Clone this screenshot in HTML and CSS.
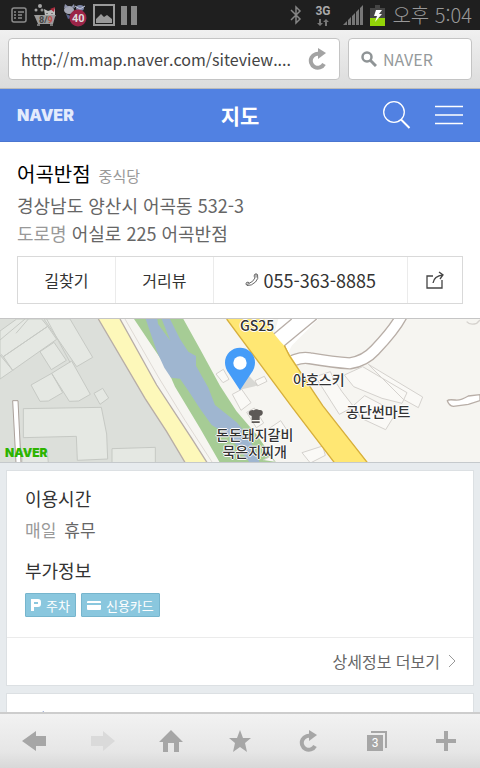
FILE: index.html
```html
<!DOCTYPE html>
<html lang="ko">
<head>
    <meta charset="UTF-8">
    <title>어곡반점 - 네이버 지도</title>
    <meta name="viewport" content="width=device-width, initial-scale=1.0">
    <link rel="stylesheet" href="styles.css">
</head>
<body>
    <div class="status-bar">
        <div class="status-left">
            <svg width="16" height="16" viewBox="0 0 16 16" fill="none" stroke="#8c8c8c" stroke-width="1.5">
                <rect x="1" y="1" width="14" height="14" rx="2"/>
                <path d="M3 5h2M7 5h6M3 8h2M7 8h4M3 11h2M7 11h4"/>
            </svg>
            <svg width="24" height="24" viewBox="0 0 24 24">
                <circle cx="7" cy="3" r="2" fill="#a5a5a5"/>
                <circle cx="3" cy="7" r="1.5" fill="#a5a5a5"/>
                <circle cx="9" cy="7" r="1.5" fill="#8f8f8f"/>
                <path d="M12 13l-1-7 4 2 3-1 4-2v8z" fill="#bdbdbd"/>
                <path d="M17 6l5-2-1 5z" fill="#a8283a"/>
                <path d="M14 10v1M19 10v1" stroke="#333"/>
                <path d="M1 12h22l-1 2-2 7H5l-3-7z" fill="#9b9b9b"/>
                <path d="M4 22h3M17 22h3" stroke="#777" stroke-width="2"/>
                <text x="6" y="20" class="tub-text">8/<tspan fill="#c0504a">9</tspan></text>
            </svg>
            <svg width="24" height="24" viewBox="0 0 24 24">
                <ellipse cx="6" cy="7" rx="5" ry="4" fill="#a4a7b5"/>
                <path d="M1 5l1-4 4 3M8 4l3-3 1 4" fill="#8a8fa8"/>
                <path d="M3 11l2 5 5-2z" fill="#58658f"/>
                <ellipse cx="17" cy="5" rx="4" ry="3" fill="#7d86a8"/>
                <path d="M12 3l5 3 5-3" stroke="#c3c7d4" fill="none"/>
                <circle cx="15" cy="15" r="8.500" fill="#9b2447"/>
                <text x="9" y="19" class="badge-text">40</text>
            </svg>
            <svg width="22" height="22" viewBox="0 0 22 22">
                <rect x="1" y="1" width="20" height="20" fill="none" stroke="#9a9a9a" stroke-width="2"/>
                <path d="M3 19v-4l5-5 3 3 3-2 5 4v4z" fill="#9a9a9a"/>
            </svg>
            <svg width="16" height="19" viewBox="0 0 16 19" fill="#8a8a8a">
                <rect width="6" height="19"/>
                <rect x="10" width="6" height="19"/>
            </svg>
        </div>
        <div class="status-right">
            <svg width="12" height="20" viewBox="0 0 12 20" fill="none" stroke="#858585" stroke-width="1.5">
                <path d="M1 5l9 9-4 4V2l4 4-9 9"/>
            </svg>
            <div class="network">
                <span>3G</span>
                <svg width="12" height="7" viewBox="0 0 12 7" fill="#777">
                    <path d="M2 0h2v4h2L3 7 0 4h2zM8 7h2V3h2L9 0 6 3h2z"/>
                </svg>
            </div>
            <svg width="20" height="20" viewBox="0 0 20 20" fill="#777">
                <path d="M0 20l4-4v4zM5 15l3-3v8H5zM9 11l3-3v12H9zM13 7l3-3v16h-3zM17 3l3-3v20h-3z"/>
            </svg>
            <svg width="15" height="21" viewBox="0 0 15 21">
                <path d="M5 0h5v3h5v10H0V3h5z" fill="#454545"/>
                <path d="M0 13h15v8H0z" fill="#93d408"/>
                <path d="M6 5h6L9 9h3l-7 8 2-6H4z" fill="#fff"/>
            </svg>
            <span class="clock">오후 5:04</span>
        </div>
    </div>

    <form class="url-bar">
        <div class="field url-field">
            <input type="text" aria-label="주소" value="http://m.map.naver.com/siteview....">
            <button type="button" aria-label="새로고침">
                <svg width="19" height="22" viewBox="0 0 19 22">
                    <path d="M16 16a7 7 0 1 1-3-9.500" fill="none" stroke="#a3a3a3" stroke-width="4"/>
                    <path d="M10 0l8 5-8 6z" fill="#a3a3a3"/>
                </svg>
            </button>
        </div>
        <div class="field search-field">
            <svg width="16" height="16" viewBox="0 0 16 16" fill="none" stroke="#8f9496" stroke-width="2.500">
                <circle cx="6" cy="6" r="4.500"/>
                <path d="M9.500 9.500L15 15" stroke-width="3"/>
            </svg>
            <input type="search" aria-label="검색" placeholder="NAVER">
        </div>
    </form>

    <main class="page">
        <header class="top-bar">
            <a href="#" class="logo">NAVER</a>
            <h1>지도</h1>
            <div class="top-actions">
                <button type="button" aria-label="검색">
                    <svg width="28" height="28" viewBox="0 0 28 28" fill="none" stroke="#fff">
                        <circle cx="11" cy="11" r="10.300" stroke-width="1.300"/>
                        <path d="M18 18.500l8.500 8.500" stroke-width="2"/>
                    </svg>
                </button>
                <button type="button" aria-label="메뉴">
                    <svg width="28" height="20" viewBox="0 0 28 20" fill="none" stroke="#fff" stroke-width="1.300">
                        <path d="M0 1.500h28M0 10h28M0 18.500h28"/>
                    </svg>
                </button>
            </div>
        </header>

        <section class="place">
            <div class="place-name">
                <h2>어곡반점</h2>
                <span>중식당</span>
            </div>
            <p>경상남도 양산시 어곡동 532-3</p>
            <p><span class="muted">도로명</span> 어실로 225 어곡반점</p>
            <nav class="place-menu">
                <a href="#">길찾기</a>
                <a href="#">거리뷰</a>
                <a href="tel:055-363-8885" class="phone">
                    <svg width="14" height="14" viewBox="0 0 14 14" fill="none" stroke="#666">
                        <path d="M9.500 1.500q1.500-1.500 3 0 1.500 4-2 7.500-4 4-8.500 3.500Q0 11 1.500 9.500q1.500-1 3 .5 3-.5 5.500-5-1.500-2-.5-3.500zM11 1v3.500M1.500 11.500l3-1"/>
                    </svg>
                    <span>055-363-8885</span>
                </a>
                <a href="#" class="share" aria-label="공유">
                    <svg width="20" height="18" viewBox="0 0 20 18" fill="none" stroke="#444" stroke-width="1.300">
                        <path d="M8 5H2v12h15V9M8 12q1-7 10-8M14 1l4 3-3 4"/>
                    </svg>
                </a>
            </nav>
        </section>

        <div class="map">
            <svg class="map-tiles" viewBox="0 12 1440 432" preserveAspectRatio="xMidYMid slice">
                <rect y="12" width="1440" height="432" fill="#f6f5f1"/>
                <path d="M0 12h300l260 432H0z" fill="#dcdfda"/>
                <!-- buildings, west side -->
                <g fill="#e5e8e3" stroke="#c6c9c4" stroke-width="3">
                    <path d="M0 48L50 12h75l18 22L10 125 0 115zM10 125L143 34l27 39L38 166zM0 120l38 46L0 192z"/>
                    <path d="M132 12h78l68 115-48 28zM120 110l42-28 37 54-45 28z"/>
                    <path d="M93 210l62-35 33 58-43 25-25 1zM155 175l60-37 56 100-35 20-28 1z"/>
                    <path d="M282 235l26-15 18 29-26 19zM70 281l234-4 16 80 3 75-91 4-3-72-159 4zM336 401l130-4v47H336zM66 410h76l3 34H66z"/>
                    <path d="M0 75L75 12M48 55L85 12M140 12l70 130" fill="none"/>
                </g>
                <path d="M38 257h16l9 187H48z" fill="#fff" stroke="#aaa09a" stroke-width="3"/>
                <!-- roads and river -->
                <path d="M295 12h65l110 198 105 160 47 74h-66l-56-94-65-100z" fill="#fdf8ba"/>
                <path d="M295 12l140 238 65 100 56 94M360 12l110 198 105 160 47 74" fill="none" stroke="#b8aea7" stroke-width="4"/>
                <path d="M375 12l100 174 80 130 83 128" fill="none" stroke="#dfdad5" stroke-width="3"/>
                <path d="M402 12h148l50 90 60 110 49 76 60 70 60 86H660l-60-104-75-125-25-57z" fill="#a6cc95"/>
                <path d="M437 12h73l30 60 25 38 23 13v29l37 66 20 52 65 52 35 42 35 80h-30l-65-84-50-30-37-52-31-48-27-39-27-3-20-30-23-50z" fill="#9fb6d0"/>
                <path d="M472 12h13l26 65-37-50z" fill="#a6cc95"/>
                <!-- buildings, east side -->
                <g fill="#faf9f6" stroke="#d5d2ce" stroke-width="3">
                    <path d="M648 177l22-14 17 30-18 10zM765 197l28-13 8 15-29 14zM697 238l28-15 28 40-30 23zM740 292l23-13 28 45-22 14z"/>
                    <path d="M808 340l34-23 20 30-28 20zM906 413l62-20 8 28-45 23zM946 185l45-15 15 30 20 30 35 45-43 23z"/>
                    <path d="M1033 180l55-25 133 78-15 32-60-15-85-35zM1062 270l32-28 95 50-32 52-75-35zM1105 148l163 98-13 32-45-25zM790 435l20-10 15 15"/>
                </g>
                <path d="M835 12h120L875 92l-15 32-45-42z" fill="#fff"/>
                <path d="M950 12L853 92M853 92l15 32M875 12l-60 50" fill="none" stroke="#b8aea7" stroke-width="4"/>
                <path d="M850 152q45-29 80-22 70 12 120 15 45-7 75-40 60-63 81-105" fill="none" stroke="#b8aea7" stroke-width="37"/>
                <path d="M850 152q45-29 80-22 70 12 120 15 45-7 75-40 60-63 81-105" fill="none" stroke="#fff" stroke-width="29"/>
                <path d="M680 12h112q35 55 61 80l115 182 137 170H1004L875 275z" fill="#ffe773"/>
                <path d="M680 12l195 263 129 169M853 92l15 30 100 150 135 172" fill="none" stroke="#d7af3c" stroke-width="4"/>
                <path d="M1342 257q5 15 18 17l45-6 35-11v-18l-35 4q-25 15-40 12-20-2-23 2z" fill="#fff" stroke="#b8aea7" stroke-width="4"/>
                <path d="M1400 20q10 12 30 5l10-10" fill="none" stroke="#d5d2ce" stroke-width="4"/>
                <!-- restaurant mark -->
                <path d="M755 315v-12q-12-3-8-13 5-7 15-4 7-6 15-1 13-2 11 11-1 6-9 7v12zM755 319h24v5h-24z" fill="#5d5957"/>
                <!-- pin -->
                <path d="M720 224l55-13-30-30z" fill="#c5c4c1" opacity=".6"/>
                <path d="M720 226l-34-52q-11-15-11-31a45 45 0 0 1 90 0q0 16-11 31z" fill="#459cf8"/>
                <circle cx="720" cy="144" r="20" fill="#fff"/>
            </svg>
            <span class="map-label label-gs">GS25</span>
            <span class="map-label label-yaho">야호스키</span>
            <span class="map-label label-mart">공단썬마트</span>
            <span class="map-label label-food">돈돈돼지갈비<br>묵은지찌개</span>
            <a href="#" class="map-logo">NAVER</a>
        </div>

        <div class="cards">
            <section class="card">
                <div class="card-body">
                    <h3>이용시간</h3>
                    <p class="hours"><span class="muted">매일</span><span>휴무</span></p>
                    <h3>부가정보</h3>
                    <div class="chips">
                        <span class="chip">
                            <svg width="10" height="12" viewBox="0 0 10 12" fill="#fff">
                                <path fill-rule="evenodd" d="M0 0h7q3 0 3 3v2q0 3-3 3H3v4H0zM3 3v2h4V3z"/>
                            </svg>
                            주차
                        </span>
                        <span class="chip">
                            <svg width="14" height="10" viewBox="0 0 14 10" fill="#fff">
                                <path d="M0 3V2q0-1 1-1h12q1 0 1 1v1zM0 5h14v4q0 1-1 1H1q-1 0-1-1z"/>
                            </svg>
                            신용카드
                        </span>
                    </div>
                </div>
                <a href="#" class="more">
                    상세정보 더보기
                    <svg width="8" height="14" viewBox="0 0 8 14" fill="none" stroke="#999">
                        <path d="M1 1l6 6-6 6"/>
                    </svg>
                </a>
            </section>
            <section class="card">
                <a href="#" class="edit-link">
                    <svg width="12" height="14" viewBox="0 0 12 14" fill="#8ea2d0">
                        <path d="M0 5l10-5v12l-10-5z"/>
                    </svg>
                    정보수정 요청
                </a>
            </section>
        </div>
    </main>

    <nav class="toolbar">
        <button type="button" aria-label="뒤로">
            <svg width="24" height="22" viewBox="0 0 24 22"><path d="M0 11L14 1v5h10v10H14v5z"/></svg>
        </button>
        <button type="button" aria-label="앞으로" disabled>
            <svg width="24" height="22" viewBox="0 0 24 22"><path d="M24 11L12 1v5H0v10h12v5z"/></svg>
        </button>
        <button type="button" aria-label="홈">
            <svg width="24" height="22" viewBox="0 0 24 22"><path d="M12 0l12 12h-4v10h-5v-9H9v9H4V12H0z"/></svg>
        </button>
        <button type="button" aria-label="북마크">
            <svg width="24" height="22" viewBox="0 0 24 22"><path d="M12 0l3 8h8l-6 5 2 9-7-5-7 5 2-9-6-5h8z"/></svg>
        </button>
        <button type="button" aria-label="새로고침">
            <svg width="19" height="22" viewBox="0 0 19 22">
                <path d="M16 16a7 7 0 1 1-3-9.500" fill="none" stroke="#a6a6a6" stroke-width="4"/>
                <path d="M10 0l8 5-8 6z"/>
            </svg>
        </button>
        <button type="button" class="windows" aria-label="창 목록">
            <svg width="20" height="20" viewBox="0 0 20 20">
                <path d="M0 4h16v16H0zM4 0h16v17h-2V2H4z"/>
            </svg>
            <span>3</span>
        </button>
        <button type="button" aria-label="추가">
            <svg width="20" height="20" viewBox="0 0 20 20"><path d="M8 0h4v8h8v4h-8v8H8v-8H0V8h8z"/></svg>
        </button>
    </nav>
</body>
</html>
```

FILE: styles.css
```css
* {
    box-sizing: border-box;
    margin: 0;
    padding: 0;
}

body {
    display: flex;
    flex-direction: column;
    height: 100vh;
    overflow: hidden;
    font-family: "Noto Sans CJK KR", sans-serif;
    background-color: #e7ebee;
    color: #333;
}

a {
    color: inherit;
    text-decoration: none;
}

button {
    display: flex;
    align-items: center;
    justify-content: center;
    border: none;
    background: none;
    cursor: pointer;
}

svg {
    display: block;
    flex-shrink: 0;
}

.muted {
    color: #999;
}

/* Status bar */
.status-bar {
    flex: 0 0 30px;
    display: flex;
    justify-content: space-between;
    align-items: center;
    padding: 0 8px 0 11px;
    background-color: #1f1f1f;
}

.status-left,
.status-right {
    display: flex;
    align-items: center;
}

.status-left {
    gap: 6px;
}

.status-right {
    gap: 7px;
}

.tub-text,
.badge-text {
    font-family: Roboto, sans-serif;
    font-weight: bold;
    font-size: 9px;
    fill: #444;
}

.badge-text {
    font-size: 11px;
    fill: #ddd;
}

.network {
    display: flex;
    flex-direction: column;
    align-items: center;
    gap: 2px;
    margin: 0 6px;
    font-family: Roboto, sans-serif;
    font-size: 12px;
    line-height: 12px;
    font-weight: bold;
    color: #aaa;
}

.clock {
    font-size: 20px;
    line-height: 30px;
    font-weight: 300;
    color: #999;
}

/* Address bar */
.url-bar {
    flex: 0 0 59px;
    display: flex;
    gap: 8px;
    padding: 8px;
    background: linear-gradient(#f0f0f0, #dcdcdc);
    border-bottom: 1px solid #bbb;
}

.field {
    display: flex;
    align-items: center;
    min-width: 0;
    border: 1px solid #c4c4c4;
    border-radius: 4px;
    background-color: #fff;
}

.field input {
    flex: 1;
    width: 0;
    min-width: 0;
    border: none;
    outline: none;
    background: none;
    font-family: "Noto Sans CJK KR", sans-serif;
    font-size: 16px;
    color: #444;
}

.url-field {
    flex: 1;
    padding: 0 12px;
}

.search-field {
    flex: 0 0 124px;
    gap: 6px;
    padding: 0 12px;
}

.search-field input::placeholder {
    color: #959a9c;
}

/* Page */
.page {
    flex: 1;
    min-height: 0;
    overflow: hidden;
}

.top-bar {
    display: grid;
    grid-template-columns: 1fr auto 1fr;
    align-items: center;
    height: 53px;
    padding: 0 17px;
    background-color: #5181e2;
    border-bottom: 1px solid #4a76d0;
    color: #fff;
}

.top-bar h1 {
    font-size: 21px;
    font-weight: bold;
}

.logo,
.map-logo {
    font-family: Inter, sans-serif;
    font-weight: 900;
    font-size: 16px;
    line-height: 16px;
}

.logo {
    color: #e3ebfc;
}

.top-actions {
    display: flex;
    justify-content: flex-end;
    align-items: center;
    gap: 24px;
}

.place {
    padding: 16px 17px 14px;
    background-color: #fff;
    border-bottom: 1px solid #c5c5c5;
    color: #666;
}

.place-name {
    display: flex;
    align-items: baseline;
    gap: 8px;
    line-height: 31px;
}

.place-name h2 {
    font-size: 20px;
    font-weight: normal;
    color: #000;
}

.place-name span {
    font-size: 15px;
    color: #999;
}

.place p {
    font-size: 18px;
    line-height: 28px;
}

.place-menu {
    display: flex;
    height: 48px;
    margin-top: 9px;
    border: 1px solid #d9d9d9;
    font-size: 16px;
    color: #333;
}

.place-menu a {
    flex: 98;
    display: flex;
    align-items: center;
    justify-content: center;
    gap: 5px;
    border-left: 1px solid #ebebeb;
}

.place-menu a:first-child {
    border-left: none;
}

.place-menu .phone {
    flex: 195;
    font-size: 18px;
}

.place-menu .share {
    flex: 55;
}

/* Map */
.map {
    position: relative;
    height: 144px;
    overflow: hidden;
    border-bottom: 1px solid #c5c9cc;
}

.map-tiles {
    width: 100%;
    height: 144px;
}

.map-label {
    position: absolute;
    font-size: 14px;
    line-height: 17px;
    font-weight: 500;
    text-align: center;
    white-space: nowrap;
    color: #333;
    text-shadow: 1px 0 #fff, -1px 0 #fff, 0 1px #fff, 0 -1px #fff;
}

.label-gs {
    left: 50%;
    top: -2px;
}

.label-yaho {
    left: 293px;
    top: 52px;
}

.label-mart {
    left: 346px;
    top: 84px;
}

.label-food {
    left: 216px;
    top: 107px;
}

.map-logo {
    position: absolute;
    left: 5px;
    bottom: 1px;
    font-size: 12px;
    color: #2db400;
}

/* Cards */
.cards {
    display: flex;
    flex-direction: column;
    gap: 7px;
    padding: 7px 6px;
}

.card {
    background-color: #fff;
    border: 1px solid #dce0e3;
}

.card-body {
    padding: 11px 18px 20px;
}

.card h3 {
    font-size: 18px;
    line-height: 32px;
    font-weight: normal;
    color: #333;
}

.hours {
    display: flex;
    gap: 8px;
    margin-bottom: 8px;
    font-size: 17px;
    line-height: 32px;
    color: #666;
}

.chips {
    display: flex;
    gap: 5px;
    margin-top: 7px;
}

.chip {
    display: flex;
    align-items: center;
    gap: 5px;
    height: 24px;
    padding: 0 5px;
    border: 1px solid #76b5cd;
    border-radius: 1px;
    background-color: #8ac7de;
    font-size: 13px;
    color: #fff;
}

.more {
    display: flex;
    align-items: center;
    justify-content: flex-end;
    gap: 8px;
    height: 48px;
    padding: 0 17px 2px;
    border-top: 1px solid #ebebeb;
    font-size: 16px;
    color: #666;
}

.edit-link {
    display: flex;
    align-items: center;
    gap: 20px;
    height: 48px;
    padding: 0 27px;
    font-size: 15px;
    color: #5f83c9;
}

/* Bottom toolbar */
.toolbar {
    flex: 0 0 56px;
    display: flex;
    background: linear-gradient(#f2f2f2, #e6e6e6 70%, #d8d8d8);
    border-top: 2px solid #cdcdcd;
}

.toolbar button {
    flex: 1;
    fill: #a6a6a6;
}

.toolbar button:disabled {
    fill: #dadada;
}

.windows {
    position: relative;
}

.windows span {
    position: absolute;
    left: 0;
    right: 4px;
    top: 20px;
    text-align: center;
    font-family: Roboto, sans-serif;
    font-size: 12px;
    line-height: 18px;
    color: #fff;
}
```
